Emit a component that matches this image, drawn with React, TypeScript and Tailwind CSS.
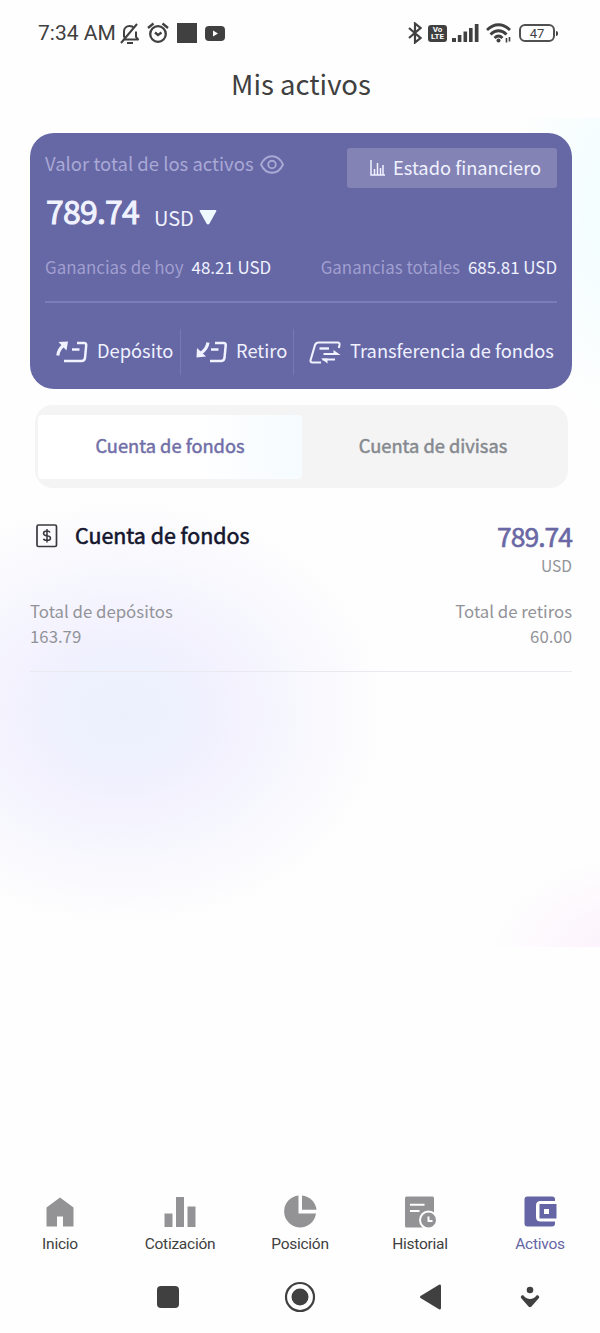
import type { ReactNode } from "react";

const tabs = [
  { label: "Inicio", icon: <HomeIcon /> },
  { label: "Cotización", icon: <BarsIcon /> },
  { label: "Posición", icon: <PieIcon /> },
  { label: "Historial", icon: <HistoryIcon /> },
  { label: "Activos", icon: <WalletIcon />, active: true },
];

function HomeIcon() {
  return (
    <svg width="28" height="30" viewBox="0 0 28 30" fill="currentColor">
      <path d="M14 0.5 27.5 10.5V29.5H17V19.5H11V29.5H0.5V10.5Z" />
    </svg>
  );
}

function BarsIcon() {
  return (
    <svg width="32" height="30" viewBox="0 0 32 30" fill="currentColor">
      <path d="M0.5 16.5h8v13.5h-8zM12 0h8v30h-8zM23.5 9.5h8v20.5h-8z" />
    </svg>
  );
}

function PieIcon() {
  return (
    <svg width="33" height="33" viewBox="0 0 33 33" fill="currentColor">
      <path d="M14.5 0.5V18.5H32A16 16 0 1 1 14.5 0.5Z" />
      <path d="M18 0.5A16 16 0 0 1 32.5 14.8H18Z" />
    </svg>
  );
}

function HistoryIcon() {
  return (
    <svg width="32" height="32" viewBox="0 0 32 32" fill="none">
      <rect x="1" y="0.5" width="29" height="31" rx="1.5" fill="currentColor" />
      <path d="M6 8.8h14.5M6 15h9.5" stroke="#fefefe" strokeWidth="2" />
      <circle cx="24.5" cy="24" r="8.5" fill="currentColor" stroke="#fefefe" strokeWidth="2" />
      <path d="M24.5 20.5v4.5h4" stroke="#fefefe" strokeWidth="2" />
    </svg>
  );
}

function WalletIcon() {
  return (
    <svg width="33" height="31" viewBox="0 0 33 31" fill="currentColor">
      <path d="M3.5 0.5H28Q31 0.5 31 3V5H16.5Q12 5 12 9.5V21Q12 25.5 16.5 25.5H31V27.5Q31 30.5 28 30.5H3.5Q0.5 30.5 0.5 27.5V3.5Q0.5 0.5 3.5 0.5Z" />
      <path fillRule="evenodd" d="M15.5 8H32.5V22.5H15.5ZM20 13V18H25V13Z" />
    </svg>
  );
}

function StatusBar() {
  return (
    <header className="flex h-[66px] items-center pl-[38px] font-[Roboto,sans-serif] text-[#404040]">
      <span className="w-[82px] pt-[2px] text-[21px] whitespace-nowrap">7:34 AM</span>
      <svg className="mt-px" width="20" height="22" viewBox="0 0 20 22" fill="none" stroke="currentColor" strokeWidth="2">
        <path d="M1 20 17 1M4 16.5H18.5M4 14.5V8.500C4 5 6.500 3 9.500 3 11.500 3 13 3.500 14 5M16 8.500V14L18.500 17M7 20H13" />
      </svg>
      <svg className="ml-[7px]" width="22" height="22" viewBox="0 0 22 22" fill="none" stroke="currentColor" strokeWidth="2.3">
        <circle cx="11" cy="12" r="7.8" />
        <path d="M1 6 6.500 1.500M15.500 1.500 21 6M8 10.500 11 13 14.500 10.500" />
      </svg>
      <span className="ml-[8px] h-5 w-5 bg-[#404040]" />
      <svg className="ml-[8px]" width="20" height="15" viewBox="0 0 20 15">
        <rect width="20" height="15" rx="4" fill="currentColor" />
        <path d="M8 4.500 13 7.500 8 10.500Z" fill="#fff" />
      </svg>
      <svg className="ml-[183px]" width="14" height="22" viewBox="0 0 14 22" fill="none" stroke="currentColor" strokeWidth="2.2">
        <path d="M1 6 12.500 16 7 20.500V1.500L12.500 6 1 16" />
      </svg>
      <span className="ml-[6px] flex h-[17px] w-[19px] flex-col items-center justify-center rounded-[3px] bg-[#404040] text-[8px] leading-[7px] font-bold text-white">
        <span>Vo</span>
        <span>LTE</span>
      </span>
      <svg className="ml-[5px]" width="27" height="18" viewBox="0 0 27 18" fill="currentColor">
        <path d="M0 14h4v4H0zM5.800 11h3.600v7H5.800zM11.500 7.500h3.600V18h-3.600zM17 4h3.600v14H17zM22.800 0h3.700v18h-3.700z" />
      </svg>
      <svg className="ml-[7px]" width="26" height="20" viewBox="0 0 26 20" fill="none" stroke="currentColor" strokeWidth="2.8">
        <path d="M1 7C8 0 17 0 24 7M4.500 11.500C9.500 6.500 15.500 6.500 20.500 11.500M8.500 15C11 12.500 14 12.500 16.500 15" />
        <circle cx="12.500" cy="17.500" r="2" fill="currentColor" stroke="none" />
        <path d="M20.500 19.500V15M23.500 14V18.500" strokeWidth="1.6" />
      </svg>
      <span className="ml-[7px] flex h-[18px] w-[36px] items-center justify-center rounded-[6px] border-2 border-[#505050] text-[13px] leading-none">
        47
      </span>
      <span className="ml-px h-[5px] w-[2px] rounded-r bg-[#404040]" />
    </header>
  );
}

function Action({ icon, label, className }: { icon: ReactNode; label: string; className: string }) {
  return (
    <button className={`flex h-[46px] shrink-0 items-center whitespace-nowrap ${className}`}>
      {icon}
      <span className="-mt-0.5">{label}</span>
    </button>
  );
}

function AssetCard() {
  return (
    <section className="h-[256px] rounded-[24px] bg-[#6667a5] px-[15px] pt-[15px] text-[#f0f2ff]">
      <div className="flex h-10 justify-between">
        <div className="flex h-8 items-center text-[18.5px] text-[#a9a9d5]">
          <span className="w-[215px] whitespace-nowrap">Valor total de los activos</span>
          <svg width="24" height="19" viewBox="0 0 24 19" fill="none" stroke="currentColor" strokeWidth="1.9">
            <path d="M1 9.500C6 -1.500 18 -1.500 23 9.500 18 20.500 6 20.500 1 9.500Z" />
            <circle cx="12" cy="9.500" r="3.800" />
          </svg>
        </div>
        <button className="flex h-10 w-[210px] items-center rounded-[3px] bg-[#8483b6] pl-[23px] text-[18.3px] whitespace-nowrap">
          <svg width="15" height="16" viewBox="0 0 15 16" fill="none" stroke="currentColor" strokeWidth="1.5">
            <path d="M1 0V15H15M4.500 15V9M7.500 15V3M10.500 15V8M13 15V5" />
          </svg>
          <span className="ml-2">Estado financiero</span>
        </button>
      </div>
      <div className="flex h-[50px] items-baseline">
        <span className="w-[109px] pl-px text-[32px] leading-[44px] tracking-[-0.8px] [-webkit-text-stroke:1px_currentColor]">
          789.74
        </span>
        <span className="relative top-[2px] text-[20px]">USD</span>
        <svg className="relative top-px ml-[5px]" width="18" height="15" viewBox="0 0 18 15" fill="#eefaff">
          <path d="M1.500 0H16.500Q18 0 17 1.800L10.500 13.500Q9 15.500 7.500 13.500L1 1.800Q0 0 1.500 0Z" />
        </svg>
      </div>
      <div className="mt-[14px] flex h-[30px] items-center justify-between text-[16.9px] whitespace-nowrap">
        <span>
          <span className="mr-2 text-[#a09fd0]">Ganancias de hoy</span>48.21 USD
        </span>
        <span>
          <span className="mr-2 text-[#a09fd0]">Ganancias totales</span>685.81 USD
        </span>
      </div>
      <div className="mt-[19px] h-[2px] bg-[#7c7cba]" />
      <div className="mt-[26px] flex text-[18.3px]">
        <Action
          label="Depósito"
          className="w-[136px] gap-[9px] border-r border-[#7777b5] pl-[11px]"
          icon={
            <svg width="32" height="22" viewBox="0 0 32 22" fill="none" stroke="currentColor" strokeWidth="2.5">
              <path d="M1.800 14.500Q2.500 8 8 4" strokeWidth="3.2" />
              <path d="M2.500 1 12 0.500 10.500 9.500Z" fill="currentColor" stroke="none" />
              <path d="M21 2H28Q30.500 2 30.200 4.500L29 17Q28.500 20 25.500 20H8M16 8.500H23.500" />
            </svg>
          }
        />
        <Action
          label="Retiro"
          className="w-[113px] gap-[9px] border-r border-[#7777b5] pl-[15px]"
          icon={
            <svg width="31" height="22" viewBox="0 0 31 22" fill="none" stroke="currentColor" strokeWidth="2.5">
              <path d="M12 1.500Q11 8 5 12" strokeWidth="3.2" />
              <path d="M1 7 0.500 16.500 10 15.500Z" fill="currentColor" stroke="none" />
              <path d="M19 2H27.500Q30 2 29.700 4.500L28.500 17Q28 20 25 20H14M15 8.500H22.500" />
            </svg>
          }
        />
        <Action
          label="Transferencia de fondos"
          className="gap-2 pl-[15px]"
          icon={
            <svg width="33" height="23" viewBox="0 0 33 23" fill="none" stroke="currentColor" strokeWidth="2.1">
              <path d="M12 21.500H3.500Q1 21.500 1.600 19L6 4Q7 1.500 9.500 1.500H28.500Q31 1.500 30.500 4L29.800 7" />
              <path d="M10.500 7.500H20" strokeWidth="2.4" />
              <path d="M14.500 13H29M13.500 18.500H26" />
              <path d="M24.500 9 31.500 14H24.500ZM12 17.500H18.500V22.500Z" fill="currentColor" stroke="none" />
            </svg>
          }
        />
      </div>
    </section>
  );
}

function AccountTabs() {
  return (
    <div className="mt-4 mr-1 ml-[5px] flex h-[83px] items-center rounded-[18px] bg-[#f4f4f4] pl-[3px] text-[18.3px] [-webkit-text-stroke:0.5px_currentColor]">
      <button className="h-[64px] w-[264px] rounded-[4px] bg-linear-to-r from-white from-60% to-[#f5fbff] pb-0.5 text-[#716fa7]">
        Cuenta de fondos
      </button>
      <button className="h-[64px] flex-1 pr-1 pb-0.5 text-[#85898f]">Cuenta de divisas</button>
    </div>
  );
}

function AccountSummary() {
  return (
    <section className="mt-[31px] h-[153px] border-b border-[#e9e9ef] text-[#929399]">
      <div className="flex h-[34px] items-center pl-[6px]">
        <svg width="22" height="24" viewBox="0 0 22 24" fill="none" stroke="#39383f">
          <rect x="1" y="1" width="19.500" height="21.500" rx="1.500" strokeWidth="1.7" />
          <path d="M14 8.500Q13.500 7 11 7 7.500 7 7.500 9.300 7.500 11.500 11 11.800 14.500 12.200 14.500 14.300 14.500 16.500 11 16.500 8 16.500 7.500 14.800M11 5V18.500" strokeWidth="1.5" />
        </svg>
        <h2 className="-mt-0.5 ml-[17px] text-[21.4px] text-[#14162e] [-webkit-text-stroke:0.6px_currentColor]">Cuenta de fondos</h2>
        <span className="ml-auto text-[26.5px] tracking-[-1px] text-[#6967a4] [-webkit-text-stroke:0.6px_currentColor]">
          789.74
        </span>
      </div>
      <p className="h-6 text-right text-[15.6px] leading-6">USD</p>
      <div className="mt-[22px] flex justify-between text-[16.8px] leading-[24.5px]">
        <p>
          Total de depósitos
          <br />
          163.79
        </p>
        <p className="text-right">
          Total de retiros
          <br />
          60.00
        </p>
      </div>
    </section>
  );
}

function SystemNav() {
  return (
    <div className="mt-[22px] flex h-8 items-center pl-[157px] text-[#404040]">
      <span className="h-[22px] w-[22px] rounded-[4px] bg-[#404040]" />
      <svg className="ml-[105px]" width="32" height="32" viewBox="0 0 32 32">
        <circle cx="16" cy="16" r="14" fill="none" stroke="currentColor" strokeWidth="2.2" />
        <circle cx="16" cy="16" r="8.500" fill="currentColor" />
      </svg>
      <svg className="ml-[104px]" width="21" height="26" viewBox="0 0 21 26" fill="currentColor">
        <path d="M0.500 12 19 0.700Q21 0 21 2V24Q21 26 19 25.200L0.500 14Q-0.500 13 0.500 12Z" />
      </svg>
      <svg className="ml-[79px]" width="20" height="22" viewBox="0 0 20 22" fill="currentColor">
        <circle cx="10" cy="4" r="3.300" />
        <path d="M3 9Q6 13 10 13 14 13 17 9 20.500 10 18.500 12.500L11.500 20.500Q10 22 8.500 20.500L1.500 12.500Q-0.500 10 3 9Z" />
      </svg>
    </div>
  );
}

export default function App() {
  return (
    <div className="flex h-[1333px] w-[600px] flex-col overflow-hidden bg-[#fefefe] font-['Noto_Sans_CJK_SC',sans-serif]">
      <StatusBar />
      <h1 className="h-[52px] pl-[2px] text-center text-[27.5px] leading-[35px] text-[#404040]">Mis activos</h1>
      <main className="h-[829px] bg-[radial-gradient(ellipse_265px_215px_at_123px_595px,#ecf0fd_0%,#eef1fe_22%,#f3f2fe_42%,#f8f8fe_70%,#fefefe00_100%),radial-gradient(ellipse_115px_210px_at_620px_90px,#f0fdff_0%,#fefefe00_100%),radial-gradient(ellipse_130px_100px_at_620px_840px,#fcf1fc_0%,#fefefe00_100%)] pt-[15px] pr-[28px] pl-[30px]">
        <AssetCard />
        <AccountTabs />
        <AccountSummary />
      </main>
      <footer className="mt-[244px] font-[Roboto,sans-serif]">
        <nav className="flex">
          {tabs.map((tab) => (
            <a
              key={tab.label}
              className={`flex h-[68px] w-[120px] flex-col items-center ${tab.active ? "text-[#6564a5]" : "text-[#939396]"}`}
            >
              <span className="flex h-[41px] items-center">{tab.icon}</span>
              <span className={`text-[15.5px] leading-[24px] tracking-[-0.25px] ${tab.active ? "" : "text-[#404040]"}`}>
                {tab.label}
              </span>
            </a>
          ))}
        </nav>
        <SystemNav />
      </footer>
    </div>
  );
}
